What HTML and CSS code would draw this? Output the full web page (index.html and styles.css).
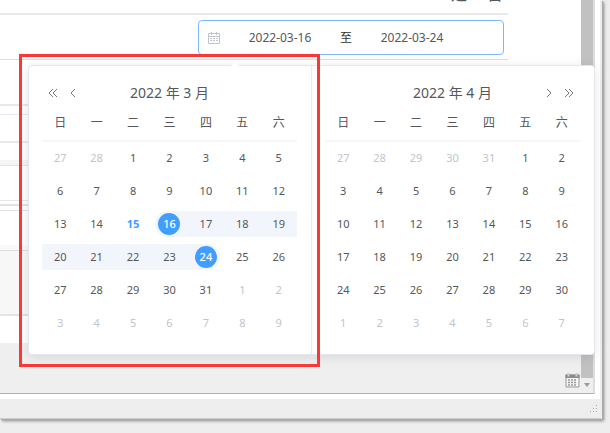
FILE: index.html
```
<!DOCTYPE html>
<html lang="zh-CN">
<head>
<meta charset="utf-8">
<title>日期范围</title>
<link rel="stylesheet" href="styles.css">
</head>
<body>
<main class="window">
  <section class="viewport">
    <div class="page">
      <div class="row row-head"><span class="head-text">是</span><span class="head-text">否</span></div>
      <div class="row row-range">
        <div class="range">
          <svg class="range-icon" viewBox="0 0 12 12" aria-hidden="true"><path d="M.5 1.500h11v10H.5zM.5 4.500h11M3.500 0v3M8.500 0v3" fill="none" stroke="#c0c4cc"/><path d="M2 6.500h8M2 8.500h8" fill="none" stroke="#c0c4cc" stroke-dasharray="2 1"/></svg>
          <input class="range-input" aria-label="开始日期" value="2022-03-16">
          <span class="range-sep">至</span>
          <input class="range-input" aria-label="结束日期" value="2022-03-24">
        </div>
      </div>
      <div class="row row-a"></div>
      <div class="row row-b"></div>
      <div class="row row-c"></div>
      <div class="row row-d"></div>
      <div class="row row-e"></div>
      <div class="row row-gap row-gap-strong"></div>
      <div class="row row-gap"></div>
      <div class="row row-g"></div>
      <div class="row row-h"></div>
      <footer class="tray">
        <svg class="tray-icon" viewBox="0 0 15 15" aria-hidden="true"><path d="M1 2h13v12H1z" fill="#f4f4f4" stroke="#999"/><path d="M.5 1.500h14v3.500H.5z" fill="#8c8c8c"/><path d="M3.500 0v3.500M11.500 0v3.500" stroke="#ccc" stroke-width="2"/><path d="M3 7h9M3 9.500h9M3 12h9" stroke="#999" stroke-width="1.500" stroke-dasharray="2 1"/></svg>
      </footer>
    </div>
    <div class="scrollbar"><div class="thumb"></div><div class="arrow"></div></div>
  </section>
  <div class="statusbar">
    <svg class="grip" viewBox="0 0 8 8" aria-hidden="true"><path d="M6 0h1v1H6zM6 3h1v1H6zM3 3h1v1H3zM0 6h1v1H0zM3 6h1v1H3zM6 6h1v1H6z" fill="#aaa"/></svg>
  </div>
</main>

<div class="picker">
  <section class="panel">
    <header class="panel-head">
      <div class="navs">
        <button class="nav" aria-label="上一年"><svg viewBox="0 0 10 10"><path d="M5 1L1 5l4 4M9 1L5 5l4 4"/></svg></button>
        <button class="nav" aria-label="上个月"><svg viewBox="0 0 10 10"><path d="M7 1L3 5l4 4"/></svg></button>
      </div>
      <h2 class="title">2022 年 3 月</h2>
    </header>
    <table class="days">
      <thead><tr><th>日</th><th>一</th><th>二</th><th>三</th><th>四</th><th>五</th><th>六</th></tr></thead>
      <tbody>
        <tr><td class="off">27</td><td class="off">28</td><td>1</td><td>2</td><td>3</td><td>4</td><td>5</td></tr>
        <tr><td>6</td><td>7</td><td>8</td><td>9</td><td>10</td><td>11</td><td>12</td></tr>
        <tr><td>13</td><td>14</td><td class="today">15</td><td class="start"><div><span>16</span></div></td><td class="in"><div>17</div></td><td class="in"><div>18</div></td><td class="in"><div>19</div></td></tr>
        <tr><td class="in"><div>20</div></td><td class="in"><div>21</div></td><td class="in"><div>22</div></td><td class="in"><div>23</div></td><td class="end"><div><span>24</span></div></td><td>25</td><td>26</td></tr>
        <tr><td>27</td><td>28</td><td>29</td><td>30</td><td>31</td><td class="off">1</td><td class="off">2</td></tr>
        <tr><td class="off">3</td><td class="off">4</td><td class="off">5</td><td class="off">6</td><td class="off">7</td><td class="off">8</td><td class="off">9</td></tr>
      </tbody>
    </table>
  </section>
  <section class="panel">
    <header class="panel-head">
      <h2 class="title">2022 年 4 月</h2>
      <div class="navs navs-next">
        <button class="nav" aria-label="下个月"><svg viewBox="0 0 10 10"><path d="M3 1l4 4-4 4"/></svg></button>
        <button class="nav" aria-label="下一年"><svg viewBox="0 0 10 10"><path d="M1 1l4 4-4 4M5 1l4 4-4 4"/></svg></button>
      </div>
    </header>
    <table class="days">
      <thead><tr><th>日</th><th>一</th><th>二</th><th>三</th><th>四</th><th>五</th><th>六</th></tr></thead>
      <tbody>
        <tr><td class="off">27</td><td class="off">28</td><td class="off">29</td><td class="off">30</td><td class="off">31</td><td>1</td><td>2</td></tr>
        <tr><td>3</td><td>4</td><td>5</td><td>6</td><td>7</td><td>8</td><td>9</td></tr>
        <tr><td>10</td><td>11</td><td>12</td><td>13</td><td>14</td><td>15</td><td>16</td></tr>
        <tr><td>17</td><td>18</td><td>19</td><td>20</td><td>21</td><td>22</td><td>23</td></tr>
        <tr><td>24</td><td>25</td><td>26</td><td>27</td><td>28</td><td>29</td><td>30</td></tr>
        <tr><td class="off">1</td><td class="off">2</td><td class="off">3</td><td class="off">4</td><td class="off">5</td><td class="off">6</td><td class="off">7</td></tr>
      </tbody>
    </table>
  </section>
</div>
<div class="marker"></div>
</body>
</html>
```
FILE: styles.css
```
* { box-sizing: border-box; }
body {
  margin: 0;
  min-height: 100vh;
  overflow: hidden;
  background: #eee;
  color: #55575b;
  font: 12px/20px "Noto Sans", "Noto Sans CJK SC", sans-serif;
}
.window {
  margin-right: 8px;
  background: #fff;
  border-right: 2px solid #eee;
  border-bottom: 1px solid #ccc;
  box-shadow: 1px 1px 0 #aaa, 2px 2px 3px #888;
}
.viewport {
  display: flex;
  margin-right: 5px;
  border-right: 2px solid #ddd;
  border-bottom: 1px solid #b0b0b0;
}
.page { flex: 1; }
.row { margin-right: 73px; border-bottom: 1px solid #ddd; }
.row-head {
  display: flex;
  justify-content: flex-end;
  align-items: flex-end;
  gap: 20px;
  height: 15px;
  padding: 0 5px 7px;
  border-bottom: 2px solid #e8e8e8;
}
.head-text { font-size: 16px; line-height: 24px; }
.row-range { display: flex; justify-content: flex-end; padding: 5px 4px 4px 0; }
.range {
  display: flex;
  align-items: center;
  width: 306px;
  height: 35px;
  padding: 0 9px;
  border: 1px solid #79b8ff;
  border-radius: 4px;
}
.range-icon { width: 12px; height: 12px; margin-right: 6px; }
.range-input {
  width: 108px;
  padding: 0;
  border: 0;
  background: none;
  color: inherit;
  font: inherit;
  text-align: center;
}
.range-sep { width: 24px; color: #303133; text-align: center; }
.row-a { height: 46px; border-bottom: 2px solid #e8e8e8; }
.row-b { height: 9px; border-color: #e4e7ed; }
.row-c { height: 28px; border-bottom: 2px solid #e8e8e8; }
.row-d { height: 23px; border-color: #dfe2ec; box-shadow: inset 0 -5px 0 #f5f5f5; }
.row-e { height: 35px; border-color: #e4e7ed; }
.row-gap { height: 5px; border-color: #dfe2ec; }
.row-gap-strong { border-bottom: 2px solid #e2e2e2; }
.row-g { height: 40px; box-shadow: inset 0 -5px 0 #f9f9f9; }
.row-h { height: 65px; background: #f7f7f7; border-bottom: 2px solid #e2e2e2; }
.tray {
  display: flex;
  justify-content: flex-end;
  align-items: flex-end;
  height: 77px;
  padding: 0 1px 5px;
  border-top: 27px solid #fff;
  background: #efefef;
}
.tray-icon { width: 15px; height: 15px; }
.scrollbar { display: flex; flex-direction: column; width: 12px; background: #efefef; }
.thumb { flex: 1; background: #c1c1c1; }
.arrow { height: 15px; padding: 5px 3px; }
.arrow::before {
  content: "";
  display: block;
  border: 3px solid transparent;
  border-top: 4px solid #999;
}
.statusbar {
  display: flex;
  justify-content: flex-end;
  height: 24px;
  padding: 6px 2px;
  border-top: 5px solid #fff;
  background: #eee;
}
.grip { width: 8px; height: 8px; }

.picker {
  position: absolute;
  top: 65px;
  left: 28px;
  right: 15px;
  display: flex;
  background: #fff;
  border: 1px solid #e4e7ed;
  border-radius: 4px;
  box-shadow: 0 2px 12px rgba(0, 0, 0, .1);
}
.picker::before {
  content: "";
  position: absolute;
  top: -4px;
  left: 201px;
  border: 5px solid transparent;
  border-top: 0;
  border-bottom-color: #fff;
}
.panel { flex: 1; padding: 13px 14px 15px 13px; }
.panel:first-child { border-right: 1px solid #e9ebee; }
.panel-head {
  display: grid;
  grid-template-columns: 1fr auto 1fr;
  align-items: center;
  height: 28px;
  padding: 0 6px;
}
.title { grid-column: 2; margin: 0; font-size: 14px; font-weight: 400; }
.navs { display: flex; }
.navs-next { justify-content: flex-end; }
.nav { display: flex; width: 20px; padding: 0; border: 0; background: none; }
.nav svg { width: 10px; height: 10px; fill: none; stroke: #777; }
.navs-next .nav { justify-content: flex-end; }
.days { width: 100%; border-collapse: collapse; table-layout: fixed; text-align: center; }
.days th { height: 34px; padding: 0 0 2px; border-bottom: 2px solid #f5f6f8; font-weight: 400; }
.days td { height: 33px; padding: 0; font-size: 11px; }
.days .off { color: #c0c4cc; }
.days .today { color: #409eff; font-weight: 700; }
.days td > div { display: flex; align-items: center; justify-content: center; height: 26px; background: #f2f6fc; }
.start > div { margin-left: 4px; border-radius: 13px 0 0 13px; padding-right: 4px; }
.end > div { margin-right: 4px; border-radius: 0 13px 13px 0; padding-left: 4px; }
.days span { width: 22px; height: 22px; border-radius: 50%; background: #409eff; color: #fff; font-weight: 500; line-height: 22px; }
.marker {
  position: absolute;
  top: 54px;
  left: 19px;
  width: 301px;
  height: 313px;
  border: 3px solid #fa3838;
}
```
